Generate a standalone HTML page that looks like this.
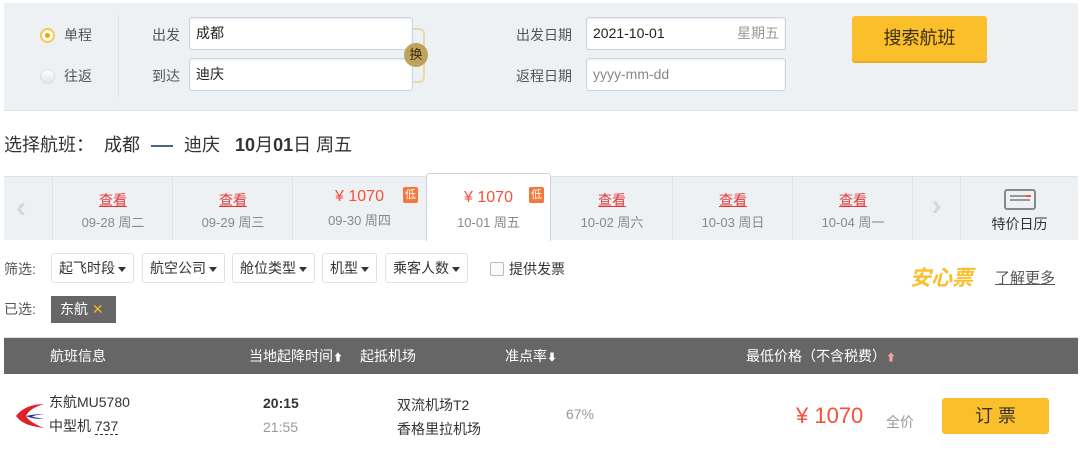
<!DOCTYPE html>
<html><head><meta charset="utf-8"><style>
*{margin:0;padding:0;box-sizing:border-box}
body{width:1080px;height:457px;background:#fff;font-family:"Liberation Sans","Noto Sans CJK SC",sans-serif;color:#333;position:relative;overflow:hidden;font-size:14px}
.a{position:absolute;white-space:nowrap}
.inp{position:absolute;background:#fff;border:1px solid #c8d3e3;border-radius:3px;box-shadow:inset 0 1px 2px rgba(0,0,0,.08);font-size:14px;padding-left:6px;line-height:31px;color:#222}
.lbl{color:#555;font-size:14px}
.cell{position:absolute;top:177px;height:63px;border-left:1px solid #dde3ea;text-align:center}
.cell .l{margin-top:14px;color:#e4393c;text-decoration:underline;font-size:14px;line-height:18px}
.cell .d{color:#888;font-size:13px;margin-top:3px}
.cell .p{margin-top:10px;color:#f5503b;font-size:16px;line-height:20px}
.low{display:inline-block;background:#f4783c;color:#fff;font-size:11px;padding:0 2px;border-radius:2px;position:absolute;top:10px;line-height:16px}
.dd{position:absolute;top:253px;height:30px;border:1px solid #dde3ea;border-radius:3px;background:#fff;font-size:14px;line-height:28px;padding:0 7px;color:#333;white-space:nowrap}
.dd:after{content:"";display:inline-block;margin-left:3px;vertical-align:middle;border:4px solid transparent;border-top:5px solid #333;border-bottom:0}
.th{position:absolute;top:338px;color:#fff;font-size:14px;line-height:36px;white-space:nowrap}
</style></head><body>
<div class="a" style="left:4px;top:3px;width:1074px;height:108px;background:#eef1f4;border-bottom:1px solid #e0e4ea"></div>
<div class="a" style="left:40px;top:28px;width:15px;height:15px;border-radius:50%;background:#fff;border:2px solid #f7c94a"></div>
<div class="a" style="left:45px;top:33px;width:5px;height:5px;border-radius:50%;background:#f0a800"></div>
<div class="a lbl" style="left:64px;top:25px">单程</div>
<div class="a" style="left:40px;top:69px;width:15px;height:15px;border-radius:50%;background:linear-gradient(#fff,#e4e4e4);border:1px solid #ddd"></div>
<div class="a lbl" style="left:64px;top:66px">往返</div>
<div class="a" style="left:118px;top:15px;width:1px;height:82px;background:#dde2e8"></div>
<div class="a lbl" style="left:152px;top:25px">出发</div>
<div class="a lbl" style="left:152px;top:66px">到达</div>
<div class="inp" style="left:189px;top:17px;width:224px;height:33px">成都</div>
<div class="inp" style="left:189px;top:58px;width:224px;height:33px">迪庆</div>
<div class="a" style="left:413px;top:28px;width:12px;height:55px;border:2px solid #e6dba8;border-left:0;border-radius:0 6px 6px 0"></div>
<div class="a" style="left:404px;top:43px;width:24px;height:24px;border-radius:50%;background:#bfa35a;color:#3a2e10;font-size:13px;text-align:center;line-height:24px">换</div>
<div class="a lbl" style="left:516px;top:25px">出发日期</div>
<div class="a lbl" style="left:516px;top:66px">返程日期</div>
<div class="inp" style="left:586px;top:17px;width:200px;height:33px">2021-10-01<span style="position:absolute;right:6px;color:#999">星期五</span></div>
<div class="inp" style="left:586px;top:58px;width:200px;height:33px;color:#888">yyyy-mm-dd</div>
<div class="a" style="left:852px;top:16px;width:135px;height:45px;background:#fbbf2b;border-radius:3px;box-shadow:0 2px 0 #eaae20;color:#3a2e10;font-size:18px;text-align:center;line-height:44px">搜索航班</div>

<div class="a" style="left:4px;top:131px;font-size:18px;color:#333">选择航班：&nbsp; 成都 <span style="display:inline-block;width:22px;height:2px;background:#4a6680;vertical-align:middle;margin:0 6px"></span> 迪庆 &nbsp; <b>10</b>月<b>01</b>日 周五</div>

<div class="a" style="left:4px;top:176px;width:1074px;height:64px;background:#eef1f4;border-top:1px solid #dde3ea"></div>
<div class="a" style="left:16px;top:193px;color:#d4d8dc;font-size:30px;font-weight:bold;line-height:30px">‹</div>
<div class="cell" style="left:52px;width:121px"><div class="l">查看</div><div class="d">09-28 周二</div></div>
<div class="cell" style="left:172px;width:121px"><div class="l">查看</div><div class="d">09-29 周三</div></div>
<div class="cell" style="left:292px;width:134px"><div class="p">¥ 1070</div><div class="d">09-30 周四</div><span class="low" style="left:110px">低</span></div>
<div class="a" style="left:426px;top:173px;width:125px;height:68px;background:#fff;border:1px solid #ccd3dc;border-bottom:0;border-radius:3px 3px 0 0;text-align:center"><div style="margin-top:14px;color:#f5503b;font-size:16px;line-height:20px">¥ 1070</div><div style="color:#888;font-size:13px;margin-top:4px">10-01 周五</div><span class="low" style="left:102px;top:13px">低</span></div>
<div class="cell" style="left:552px;width:120px;border-left:0"><div class="l">查看</div><div class="d">10-02 周六</div></div>
<div class="cell" style="left:672px;width:121px"><div class="l">查看</div><div class="d">10-03 周日</div></div>
<div class="cell" style="left:792px;width:121px"><div class="l">查看</div><div class="d">10-04 周一</div></div>
<div class="cell" style="left:912px;width:48px"><div style="color:#d4d8dc;font-size:30px;font-weight:bold;margin-top:12px">›</div></div>
<div class="cell" style="left:960px;width:118px"><div style="margin:12px auto 0;width:32px;height:21px;border:2px solid #888;border-radius:3px;position:relative"><span style="position:absolute;left:4px;top:4px;width:20px;border-top:2px solid #999;border-bottom:2px solid #999;height:6px"></span><span style="position:absolute;right:3px;top:4px;width:5px;height:2px;background:#f5503b"></span></div><div style="font-size:14px;color:#333;margin-top:4px">特价日历</div></div>

<div class="a lbl" style="left:4px;top:259px">筛选:</div>
<div class="dd" style="left:51px">起飞时段</div>
<div class="dd" style="left:142px">航空公司</div>
<div class="dd" style="left:232px">舱位类型</div>
<div class="dd" style="left:322px">机型</div>
<div class="dd" style="left:385px">乘客人数</div>
<div class="a" style="left:490px;top:262px;width:14px;height:14px;border:1px solid #bbb;border-radius:2px;background:#fafafa"></div>
<div class="a" style="left:509px;top:259px;font-size:14px">提供发票</div>
<div class="a" style="left:910px;top:262px;color:#fbbf2b;font-size:21px;font-weight:bold;font-style:italic">安心票</div>
<div class="a" style="left:995px;top:267px;color:#555;font-size:15px;text-decoration:underline">了解更多</div>

<div class="a lbl" style="left:4px;top:299px">已选:</div>
<div class="a" style="left:51px;top:296px;width:65px;height:27px;background:#666;color:#fff;font-size:14px;line-height:26px;padding-left:9px">东航 <span style="color:#f5b32c">✕</span></div>

<div class="a" style="left:4px;top:337px;width:1074px;height:37px;background:#666;border-top:1px solid #ddd"></div>
<div class="th" style="left:50px">航班信息</div>
<div class="th" style="left:249px">当地起降时间<span style="font-size:10px">⬆</span></div>
<div class="th" style="left:360px">起抵机场</div>
<div class="th" style="left:505px">准点率<span style="font-size:10px">⬇</span></div>
<div class="th" style="left:746px">最低价格（不含税费）<span style="font-size:10px;color:#f5a0a0">⬆</span></div>

<svg class="a" style="left:14px;top:402px" width="32" height="28" viewBox="0 0 32 28"><path d="M30 2 C18 2 8 6 2 14 C8 22 16 24 30 26 C20 22 14 18 12 14 C14 9 20 5 30 2Z" fill="#e1202a"/><path d="M30 12 C22 12 16 13 12 14 C16 16 22 17 30 17 C24 16 20 15 18 14.5 C22 13 26 12.5 30 12Z" fill="#2b3a8c"/></svg>
<div class="a" style="left:49px;top:392px;font-size:14px">东航MU5780</div>
<div class="a" style="left:49px;top:416px;font-size:14px">中型机 <span style="border-bottom:1px dashed #333">737</span></div>
<div class="a" style="left:263px;top:395px;font-size:14px;font-weight:bold">20:15</div>
<div class="a" style="left:263px;top:419px;font-size:14px;color:#999">21:55</div>
<div class="a" style="left:397px;top:395px;font-size:14px">双流机场T2</div>
<div class="a" style="left:397px;top:419px;font-size:14px">香格里拉机场</div>
<div class="a" style="left:566px;top:406px;font-size:14px;color:#999">67%</div>
<div class="a" style="left:796px;top:403px;font-size:22px;color:#f5503b">¥ 1070</div>
<div class="a" style="left:886px;top:412px;font-size:14px;color:#999">全价</div>
<div class="a" style="left:942px;top:398px;width:107px;height:36px;background:#fbbf2b;border-radius:3px;color:#333;font-size:18px;text-align:center;line-height:36px">订 票</div>
</body></html>
